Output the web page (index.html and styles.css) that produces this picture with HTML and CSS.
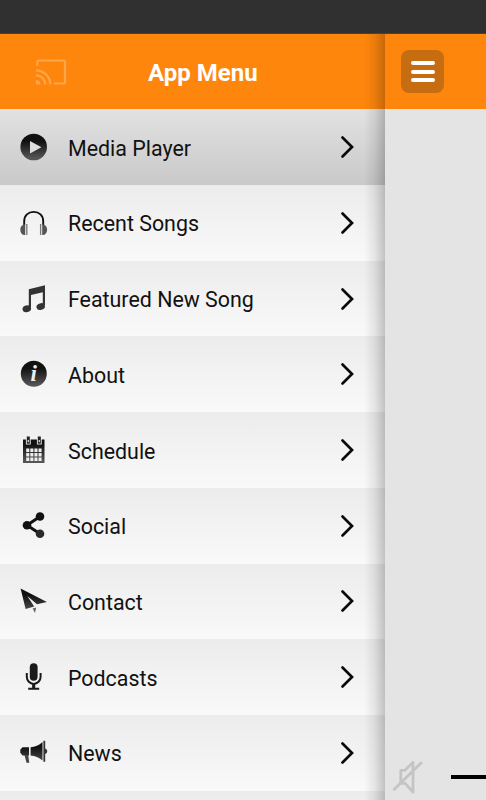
FILE: index.html
```html
<!DOCTYPE html>
<html lang="en">
<head>
    <meta charset="UTF-8">
    <meta name="viewport" content="width=device-width, initial-scale=1.0">
    <title>App Menu</title>
    <link rel="stylesheet" href="styles.css">
</head>
<body>
    <svg class="defs" width="0" height="0">
        <defs>
            <linearGradient id="shade" gradientUnits="userSpaceOnUse" x1="0" y1="0" x2="0" y2="28">
                <stop offset="0.3" stop-color="#111"/>
                <stop offset="0.9" stop-color="#555"/>
            </linearGradient>
            <symbol id="arrow" viewBox="0 0 14 24">
                <path d="M2.5 2.5L12 12L2.5 21.5" fill="none" stroke="#0a0a0a" stroke-width="2.7" stroke-linecap="round"/>
            </symbol>
        </defs>
    </svg>
    <div class="status-bar"></div>
    <div class="app">
        <div class="menu">
            <div class="menu-header">
                <svg class="cast" viewBox="0 0 32 26" fill="none" stroke="#ffa64b" stroke-width="2.2">
                    <path d="M2.3 7V3.5Q2.3 1.5 4.3 1.5H28Q30 1.5 30 3.5V22.5Q30 24.5 28 24.5H19"/>
                    <path d="M1 11.3A14.3 14.3 0 0 1 15.3 25.6M1 16.3A9.3 9.3 0 0 1 10.3 25.6"/>
                    <path d="M1 21A4.5 4.5 0 0 1 5.5 25.6H1Z" fill="#ffa64b" stroke="none"/>
                </svg>
                <h1 class="title">App Menu</h1>
            </div>
            <ul class="items">
                <li class="item active">
                    <svg class="icon" viewBox="0 0 28 28">
                        <circle cx="13.7" cy="14" r="13.3" fill="url(#shade)"/>
                        <path d="M10 8L21.4 14.2L10 20.4Z" fill="#ddd"/>
                    </svg>
                    <span class="label">Media Player</span>
                    <svg class="arrow"><use href="#arrow"/></svg>
                </li>
                <li class="item">
                    <svg class="icon" viewBox="0 0 28 28">
                        <path d="M4.2 16V12.3C4.2 6.5 8.2 2.9 13.7 2.9S23.2 6.5 23.2 12.3V16" fill="none" stroke="#111" stroke-width="1.9"/>
                        <path d="M5.2 15.3V26C2 26 .3 23.7 .3 20.7S2 15.6 5.2 15.3ZM22.2 15.3V26C25.4 26 27.1 23.7 27.1 20.7S25.4 15.6 22.2 15.3Z" fill="#555"/>
                        <path d="M6.8 15V26M20.6 15V26" stroke="#777" stroke-width="1.3"/>
                    </svg>
                    <span class="label">Recent Songs</span>
                    <svg class="arrow"><use href="#arrow"/></svg>
                </li>
                <li class="item">
                    <svg class="icon" viewBox="0 0 28 28" fill="#333">
                        <path d="M8.8 4.2L25 .3V20H22.8V7.2L11 10V22.5H8.8Z"/>
                        <ellipse cx="6.8" cy="23.8" rx="4.3" ry="3.3" transform="rotate(-15 6.8 23.8)"/>
                        <ellipse cx="20.7" cy="21.6" rx="4.3" ry="3.3" transform="rotate(-15 20.7 21.6)"/>
                    </svg>
                    <span class="label">Featured New Song</span>
                    <svg class="arrow"><use href="#arrow"/></svg>
                </li>
                <li class="item">
                    <svg class="icon" viewBox="0 0 28 28">
                        <circle cx="13.8" cy="13.7" r="13" fill="url(#shade)"/>
                        <text class="info" x="13.6" y="20.8">i</text>
                    </svg>
                    <span class="label">About</span>
                    <svg class="arrow"><use href="#arrow"/></svg>
                </li>
                <li class="item">
                    <svg class="icon" viewBox="0 0 28 28">
                        <path d="M3 3.5H24.5V27H3Z" fill="url(#shade)"/>
                        <path d="M8.3 .3V8.6M19.3 .3V8.6" stroke="#f0f0f0" stroke-width="4.8"/>
                        <path d="M8.3 .5V7.8M19.3 .5V7.8" stroke="#222" stroke-width="3"/>
                        <path d="M8.3 4V6.3M19.3 4V6.3" stroke="#ddd" stroke-width="1.2"/>
                        <path d="M6.2 14.2H21.6M6.2 18.8H21.6M6.2 23.2H21.6" stroke="#eee" stroke-width="3.5" stroke-dasharray="3.1 1"/>
                    </svg>
                    <span class="label">Schedule</span>
                    <svg class="arrow"><use href="#arrow"/></svg>
                </li>
                <li class="item">
                    <svg class="icon" viewBox="0 0 28 28" fill="#111">
                        <path d="M20 4.5L7 13.2L20 21.7" fill="none" stroke="#111" stroke-width="3"/>
                        <circle cx="20" cy="4.5" r="4.3"/>
                        <circle cx="7" cy="13.2" r="4.3"/>
                        <circle cx="20" cy="21.7" r="4.3" fill="#2a2a2a"/>
                    </svg>
                    <span class="label">Social</span>
                    <svg class="arrow"><use href="#arrow"/></svg>
                </li>
                <li class="item">
                    <svg class="icon" viewBox="0 0 28 28">
                        <path d="M.6 1.4L26.9 15L17 17.3L7.3 9L14.2 19.6L5.6 22Z" fill="url(#shade)"/>
                        <path d="M12.6 21.4L16.2 20.4L15 26Z" fill="#666"/>
                    </svg>
                    <span class="label">Contact</span>
                    <svg class="arrow"><use href="#arrow"/></svg>
                </li>
                <li class="item">
                    <svg class="icon" viewBox="0 0 28 28">
                        <rect x="9.8" y=".3" width="7.8" height="17.4" rx="3.9" fill="#1a1a1a"/>
                        <path d="M6.8 10V13.7A6.9 7.2 0 0 0 20.6 13.7V10M13.7 21V25M8.2 25.8H19.2" fill="none" stroke="#1a1a1a" stroke-width="2"/>
                        <path d="M12.2 21H15.2V26H12.2Z" fill="#1a1a1a"/>
                    </svg>
                    <span class="label">Podcasts</span>
                    <svg class="arrow"><use href="#arrow"/></svg>
                </li>
                <li class="item">
                    <svg class="icon" viewBox="0 0 28 28" fill="url(#shade)">
                        <path d="M2.5 8.2H9V16.4H2.5L.3 13.8V10.8Z"/>
                        <path d="M4.5 16H8.2L9.3 23.8H6.5Z" fill="#444"/>
                        <path d="M10.6 8.2C15 8 19 6.2 22.5 3V21.6C19 18.4 15 16.6 10.6 16.4Z"/>
                        <path d="M23.4 1.8H25.2V22.8H23.4ZM25.2 9.5Q27.3 10 27.3 12.2T25.2 14.9Z" fill="#333"/>
                    </svg>
                    <span class="label">News</span>
                    <svg class="arrow"><use href="#arrow"/></svg>
                </li>
                <li class="item"></li>
            </ul>
        </div>
        <div class="page">
            <div class="page-header">
                <div class="menu-button">
                    <span class="bar"></span>
                    <span class="bar"></span>
                    <span class="bar"></span>
                </div>
            </div>
            <div class="player">
                <svg class="mute" viewBox="0 0 32 34" fill="none" stroke="#c4c4c4" stroke-width="2.8" stroke-linejoin="round" stroke-linecap="round">
                    <path d="M8.8 10.3H13L21 2.3V32L13 23.3H8.8Z"/>
                    <path d="M2.3 29.3L29 3"/>
                </svg>
                <div class="volume"></div>
            </div>
        </div>
    </div>
</body>
</html>
```
FILE: styles.css
```css
* { box-sizing: border-box; }
body {
    margin: 0;
    width: 486px;
    height: 800px;
    overflow: hidden;
    display: flex;
    flex-direction: column;
    font-family: Roboto, sans-serif;
    background-color: #e4e4e4;
}
.defs { position: absolute; }
.status-bar {
    flex: none;
    height: 34px;
    background-color: #303030;
    border-bottom: 1px solid #4b4036;
}
.app {
    display: flex;
    height: 766px;
}
.menu {
    position: relative;
    flex: none;
    width: 385px;
    overflow: hidden;
}
/* shadow the page casts on the open menu */
.menu::after {
    content: '';
    position: absolute;
    top: 0;
    right: 0;
    bottom: 0;
    width: 21px;
    background: linear-gradient(to right, rgba(0,0,0,0), rgba(0,0,0,0.08) 50%, rgba(0,0,0,0.22));
}
.menu-header {
    display: flex;
    align-items: center;
    height: 75.3px;
    padding-left: 35px;
    background-color: #ff860d;
}
.cast {
    width: 32px;
    height: 26px;
}
.title {
    margin: 2px 0 0 81px;
    font-size: 24px;
    line-height: 28px;
    font-weight: bold;
    color: #fff;
}
.items {
    margin: 0;
    padding: 0;
    list-style: none;
}
.item {
    display: flex;
    align-items: center;
    height: 75.72px;
    padding: 0 31px 0 20px;
    background: linear-gradient(#ececec, #f9f9f9);
}
.item.active { background: linear-gradient(#e2e2e2, #c9c9c9); }
.icon {
    flex: none;
    width: 28px;
    height: 28px;
}
.info {
    font-family: "Liberation Serif", serif;
    font-size: 23px;
    font-style: italic;
    font-weight: bold;
    text-anchor: middle;
    fill: #eee;
}
.label {
    flex: 1;
    padding: 3px 0 0 20px;
    font-size: 21.4px;
    line-height: 28px;
    color: #111;
}
.arrow {
    width: 14px;
    height: 24px;
}
.page {
    flex: 1;
    display: flex;
    flex-direction: column;
    justify-content: space-between;
}
.page-header {
    height: 75.3px;
    padding: 16px;
    background-color: #ff860d;
}
.menu-button {
    display: flex;
    flex-direction: column;
    align-items: center;
    justify-content: center;
    gap: 4.5px;
    width: 43px;
    height: 43px;
    border-radius: 8px;
    background-color: #c66d11;
}
.bar {
    width: 24px;
    height: 4px;
    border-radius: 2px;
    background-color: #fff;
}
.player {
    display: flex;
    align-items: center;
    padding: 0 0 6px 7px;
}
.mute {
    width: 32px;
    height: 34px;
}
.volume {
    flex: 1;
    height: 4px;
    margin-left: 27px;
    background-color: #000;
}
```
